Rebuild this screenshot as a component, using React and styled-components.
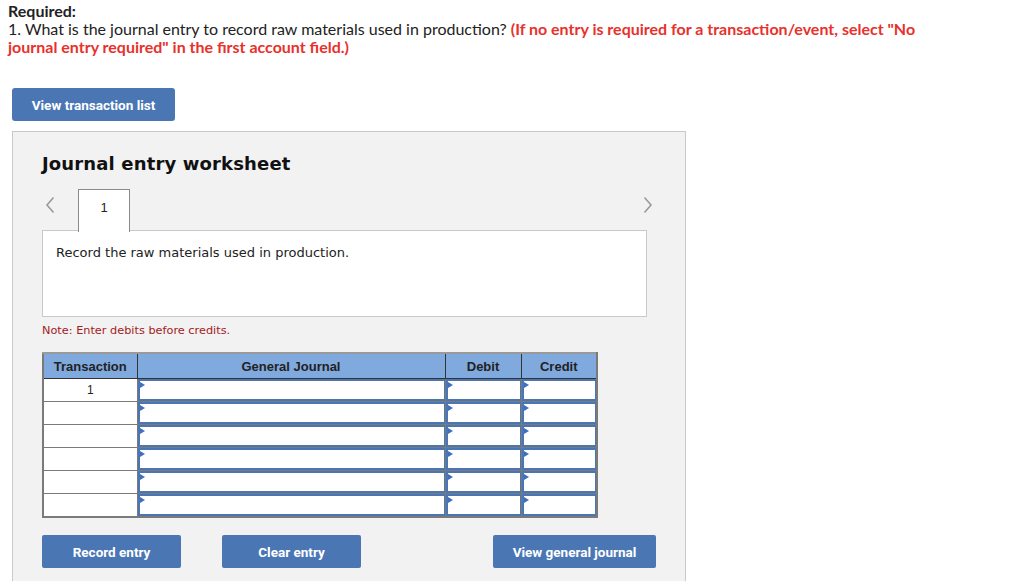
import React from 'react';
import styled, { createGlobalStyle } from 'styled-components';

const GlobalStyle = createGlobalStyle`
    html, body {
        margin: 0;
        padding: 0;
        background: #fff;
    }
    body {
        font-family: "Lato", "Liberation Sans", sans-serif;
        color: #222;
    }
`;

const rows = [1, 2, 3, 4, 5, 6];

export default function App() {
    return (
        <Page>
            <GlobalStyle />
            <Question>
                <strong className="label">Required:</strong>
                <p>
                    1. What is the journal entry to record raw materials used in production?{' '}
                    <span className="hint">(If no entry is required for a transaction/event, select "No journal entry required" in the first account field.)</span>
                </p>
            </Question>
            <TopButton>View transaction list</TopButton>
            <Worksheet>
                <Title>Journal entry worksheet</Title>
                <NavRow>
                    <Chevron dir="left" />
                    <Tab>1</Tab>
                    <Spacer />
                    <Chevron dir="right" />
                </NavRow>
                <Description>Record the raw materials used in production.</Description>
                <Note>Note: Enter debits before credits.</Note>
                <Table>
                    <colgroup>
                        <col style={{ width: 94 }} />
                        <col style={{ width: 308 }} />
                        <col style={{ width: 76 }} />
                        <col style={{ width: 76 }} />
                    </colgroup>
                    <thead>
                        <tr>
                            <Th>Transaction</Th>
                            <Th>General Journal</Th>
                            <Th>Debit</Th>
                            <Th>Credit</Th>
                        </tr>
                    </thead>
                    <tbody>
                        {rows.map(n => (
                            <tr key={n}>
                                <NumCell>{n === 1 ? '1' : ''}</NumCell>
                                <InputCell><Field /></InputCell>
                                <InputCell><Field /></InputCell>
                                <InputCell><Field /></InputCell>
                            </tr>
                        ))}
                    </tbody>
                </Table>
                <Actions>
                    <ActionButton w={139}>Record entry</ActionButton>
                    <ActionButton w={139}>Clear entry</ActionButton>
                    <ActionButton w={163} push>View general journal</ActionButton>
                </Actions>
            </Worksheet>
        </Page>
    );
}

function Chevron({ dir }) {
    return (
        <ChevronIcon dir={dir} width="12" height="18" viewBox="0 0 12 18">
            {dir === 'left'
                ? <polyline points="9.5,1.5 3,9 9.5,16.5" />
                : <polyline points="2.5,1.5 9,9 2.5,16.5" />}
        </ChevronIcon>
    );
}

const Page = styled.div`
    width: 1024px;
    height: 581px;
    overflow: hidden;
`;

const Question = styled.div`
    padding: 2px 0 0 8px;
    font-size: 16px;
    line-height: 18px;
    color: #222;

    .label {
        display: block;
        font-weight: 700;
    }
    p {
        margin: 0;
        width: 930px;
    }
    .hint {
        color: #e8312b;
        font-weight: 700;
    }
`;

const TopButton = styled.button`
    display: block;
    margin: 32px 0 0 12px;
    width: 163px;
    height: 33px;
    border: none;
    border-radius: 3px;
    background: #4a76b4;
    color: #fff;
    font-family: "Roboto", "Liberation Sans", sans-serif;
    font-weight: 700;
    font-size: 13.5px;
    padding: 0;
`;

const Worksheet = styled.div`
    margin: 10px 0 0 12px;
    width: 674px;
    height: 470px;
    background: #f2f2f2;
    border: 1px solid #c9c9c9;
    padding: 0 38px 0 29px;
    box-sizing: border-box;
`;

const Title = styled.h2`
    margin: 20px 0 0 0;
    font-family: "DejaVu Sans", "Verdana", sans-serif;
    font-weight: 700;
    font-size: 18px;
    line-height: 24px;
    color: #111;
    letter-spacing: 0.15px;
`;

const NavRow = styled.div`
    display: flex;
    align-items: flex-start;
    margin-top: 13px;
    height: 42px;
`;

const ChevronIcon = styled.svg`
    flex-shrink: 0;
    margin: ${p => (p.dir === 'left' ? '7px 0 0 2px' : '7px -7px 0 0')};
    fill: none;
    stroke: #9a9a9a;
    stroke-width: 1.6;
`;

const Tab = styled.div`
    margin-left: 22px;
    width: 52px;
    height: 43px;
    box-sizing: border-box;
    background: #fff;
    border: 1px solid #8a8a8a;
    border-bottom: none;
    text-align: center;
    padding-top: 10px;
    font-family: "Liberation Sans", "Arial", sans-serif;
    font-size: 13px;
    color: #222;
    position: relative;
    z-index: 1;
`;

const Spacer = styled.div`
    flex: 1;
`;

const Description = styled.div`
    height: 87px;
    box-sizing: border-box;
    margin-top: -1px;
    background: #fff;
    border: 1px solid #c9c9c9;
    padding: 14px 13px;
    font-family: "DejaVu Sans", "Verdana", sans-serif;
    font-size: 13px;
    color: #222;
`;

const Note = styled.div`
    margin: 7px 0 0 0;
    font-family: "DejaVu Sans", "Verdana", sans-serif;
    font-size: 11.3px;
    line-height: 14px;
    color: #a3201c;
`;

const Table = styled.table`
    margin-top: 14px;
    width: 555px;
    border-collapse: collapse;
    table-layout: fixed;
    font-family: "Liberation Sans", "Arial", sans-serif;
    border: 2px solid #7a7a7a;
    border-top-color: #9a9a9a;
`;

const Th = styled.th`
    height: 24px;
    padding: 0;
    background: #80a9dd;
    border: 1px solid #333;
    border-top: none;
    font-size: 13px;
    font-weight: 700;
    color: #222;
    text-align: center;
`;

const NumCell = styled.td`
    height: 22px;
    padding: 0;
    background: #fff;
    border: 1px solid #7a7a7a;
    text-align: center;
    font-size: 12px;
    color: #222;
`;

const InputCell = styled.td`
    height: 22px;
    padding: 0;
    border: 1px solid #7a7a7a;
    background: #fff;
`;

const Field = styled.div`
    position: relative;
    height: 22px;
    box-sizing: border-box;
    border: 2px solid #4a76b4;
    border-right-width: 1px;
    background: #fff;

    &::before {
        content: '';
        position: absolute;
        left: 0;
        top: 1px;
        border-left: 5px solid #3f6fc0;
        border-top: 3px solid transparent;
        border-bottom: 3px solid transparent;
    }
`;

const Actions = styled.div`
    display: flex;
    gap: 41px;
    margin-top: 17px;
`;

const ActionButton = styled.button`
    flex-shrink: 0;
    width: ${p => p.w}px;
    height: 33px;
    margin-left: ${p => (p.push ? '91px' : '0')};
    border: none;
    border-radius: 2px;
    background: #4a76b4;
    color: #fff;
    font-family: "Roboto", "Liberation Sans", sans-serif;
    font-weight: 700;
    font-size: 13.5px;
    padding: 0;
`;
